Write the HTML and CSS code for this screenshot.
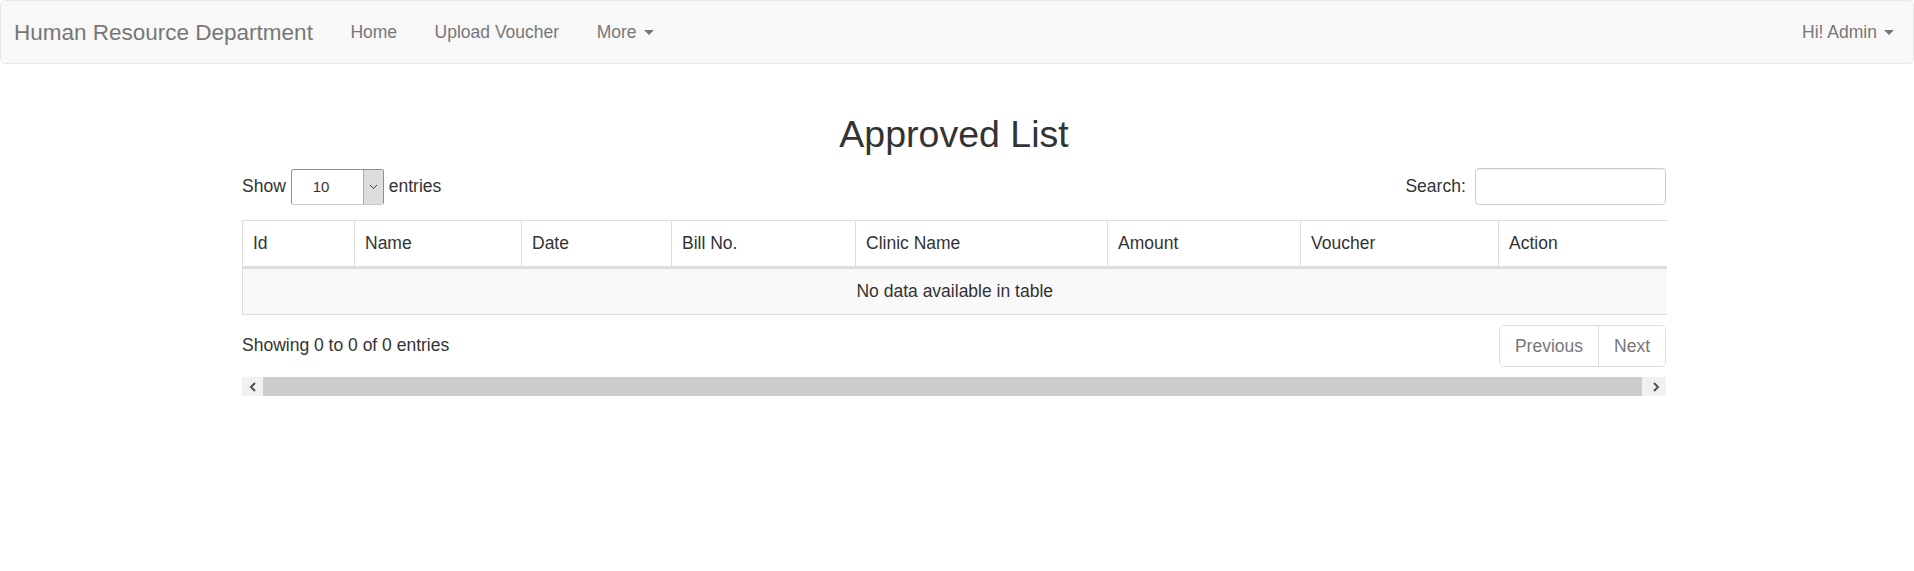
FILE: index.html
```html
<!DOCTYPE html>
<html lang="en">
<head>
<meta charset="utf-8">
<title>Approved List</title>
<link rel="stylesheet" href="styles.css">
</head>
<body>
<nav class="navbar">
  <div class="nav-left">
    <a class="brand" href="#">Human Resource Department</a>
    <ul class="nav">
      <li><a href="#">Home</a></li>
      <li><a href="#">Upload Voucher</a></li>
      <li><a href="#">More <span class="caret"></span></a></li>
    </ul>
  </div>
  <ul class="nav">
    <li><a href="#">Hi! Admin <span class="caret"></span></a></li>
  </ul>
</nav>

<main class="container">
  <h2 class="title">Approved List</h2>

  <div class="dt-top">
    <label class="dt-length">Show
      <span class="select-wrap">
        <select class="select"><option>10</option><option>25</option><option>50</option><option>100</option></select>
        <span class="select-arrow"><svg width="9" height="6" viewBox="0 0 9 6"><polyline points="1,1 4.5,4.5 8,1" fill="none" stroke="#333" stroke-width="1"/></svg></span>
      </span>
      entries</label>
    <label class="dt-filter">Search:<input class="search" type="search"></label>
  </div>

  <table class="table">
    <colgroup>
      <col style="width:112px"><col style="width:167px"><col style="width:150px"><col style="width:184px">
      <col style="width:252px"><col style="width:193px"><col style="width:198px"><col style="width:168px">
    </colgroup>
    <thead>
      <tr>
        <th>Id</th><th>Name</th><th>Date</th><th>Bill No.</th><th>Clinic Name</th><th>Amount</th><th>Voucher</th><th>Action</th>
      </tr>
    </thead>
    <tbody>
      <tr><td class="empty" colspan="8">No data available in table</td></tr>
    </tbody>
  </table>

  <div class="dt-bottom">
    <div class="dt-info">Showing 0 to 0 of 0 entries</div>
    <ul class="pagination">
      <li><a href="#">Previous</a></li>
      <li><a href="#">Next</a></li>
    </ul>
  </div>

  <div class="hscroll">
    <span class="hs-btn"><svg width="8" height="10" viewBox="0 0 8 10"><polyline points="6,1 2,5 6,9" fill="none" stroke="#505050" stroke-width="2"/></svg></span>
    <span class="hs-track"><span class="hs-thumb"></span></span>
    <span class="hs-btn hs-right"><svg width="8" height="10" viewBox="0 0 8 10"><polyline points="2,1 6,5 2,9" fill="none" stroke="#505050" stroke-width="2"/></svg></span>
  </div>
</main>
</body>
</html>
```

FILE: styles.css
```css
* { box-sizing: border-box; }

html, body {
  margin: 0;
  padding: 0;
  background: #fff;
}

body {
  font-family: "Liberation Sans", Arial, Helvetica, sans-serif;
  font-size: 17.5px;
  line-height: 25px;
  color: #333;
}

a { text-decoration: none; }

/* Navbar */
.navbar {
  display: flex;
  justify-content: space-between;
  align-items: stretch;
  height: 64px;
  background: #f8f8f8;
  border: 1px solid #e7e7e7;
  border-radius: 5px;
  margin-bottom: 25px;
}

.nav-left {
  display: flex;
  align-items: stretch;
}

.brand {
  display: flex;
  align-items: center;
  padding: 0 18.75px 0 13px;
  font-size: 22.5px;
  line-height: 25px;
  color: #777;
}

.nav {
  display: flex;
  list-style: none;
  margin: 0;
  padding: 0;
}

.nav li { display: flex; }

.nav a {
  display: flex;
  align-items: center;
  padding: 0 18.75px;
  color: #777;
  font-size: 17.5px;
  white-space: pre;
}

.caret {
  display: inline-block;
  width: 0;
  height: 0;
  margin-left: 2.5px;
  border-top: 5px solid #777;
  border-left: 5px solid transparent;
  border-right: 5px solid transparent;
  vertical-align: middle;
}

/* Content */
.container {
  display: flow-root;
  width: 1424px;
  margin-left: calc(50% - 715px);
}

.title {
  margin: 25px 0 12.5px;
  font-size: 37.5px;
  line-height: 41.25px;
  font-weight: 500;
  text-align: center;
  color: #333;
}

.dt-top {
  display: flex;
  justify-content: space-between;
  align-items: center;
  height: 37.5px;
  margin-bottom: 15px;
}

.dt-length, .dt-filter {
  display: flex;
  align-items: center;
  font-weight: normal;
}

.select-wrap {
  display: inline-flex;
  width: 93px;
  height: 36px;
  margin: 0 5px 0 5px;
  border: 1px solid #8f8f8f;
  border-bottom-color: #c8c8c8;
  border-radius: 3px;
  overflow: hidden;
  background: #fff;
}

.select {
  flex: 1;
  min-width: 0;
  border: 0;
  outline: 0;
  padding: 0 0 0 21px;
  font-family: "Liberation Sans", Arial, sans-serif;
  font-size: 15px;
  color: #333;
  background: #fff;
  -webkit-appearance: none;
  appearance: none;
}

.select-arrow {
  display: flex;
  align-items: center;
  justify-content: center;
  width: 20px;
  background: #dddddd;
  border-left: 1px solid #a8a8a8;
}

.search {
  width: 191.5px;
  height: 37.5px;
  margin-left: 8.75px;
  padding: 6px 12px;
  border: 1px solid #ccc;
  border-radius: 3.75px;
  box-shadow: inset 0 1px 1px rgba(0,0,0,.075);
  font-size: 15px;
  outline: 0;
}

/* Table */
.table {
  width: 1424px;
  table-layout: fixed;
  border-collapse: collapse;
  border-top: 1px solid #ddd;
  border-left: 1px solid #ddd;
  border-bottom: 1px solid #ddd;
  margin: 0 0 7.5px;
}

.table th {
  text-align: left;
  font-weight: normal;
  padding: 10px;
  line-height: 25px;
  border-right: 1px solid #ddd;
  border-bottom: 3px solid #ddd;
}

.table th:last-child { border-right: 0; }

.table td {
  padding: 10px;
  line-height: 25px;
  background: #f9f9f9;
}

.table td.empty { text-align: center; }

.dt-bottom {
  display: flex;
  justify-content: space-between;
  align-items: flex-start;
}

.dt-info {
  padding-top: 10px;
}

.pagination {
  display: flex;
  list-style: none;
  margin: 2.5px 0;
  padding: 0;
  border: 1px solid #ddd;
  border-radius: 5px;
  overflow: hidden;
}

.pagination li + li { border-left: 1px solid #ddd; }

.pagination a {
  display: block;
  padding: 7.5px 15px;
  line-height: 25px;
  color: #777;
  background: #fff;
}

/* Horizontal scrollbar */
.hscroll {
  display: flex;
  height: 19px;
  margin-top: 7.5px;
  background: #f1f1f1;
}

.hs-btn {
  display: flex;
  align-items: center;
  justify-content: center;
  width: 21px;
}

.hs-track {
  flex: 1;
  display: flex;
  padding: 0 3px 0 0;
}

.hs-thumb {
  flex: 1;
  background: #cdcdcd;
}
```
